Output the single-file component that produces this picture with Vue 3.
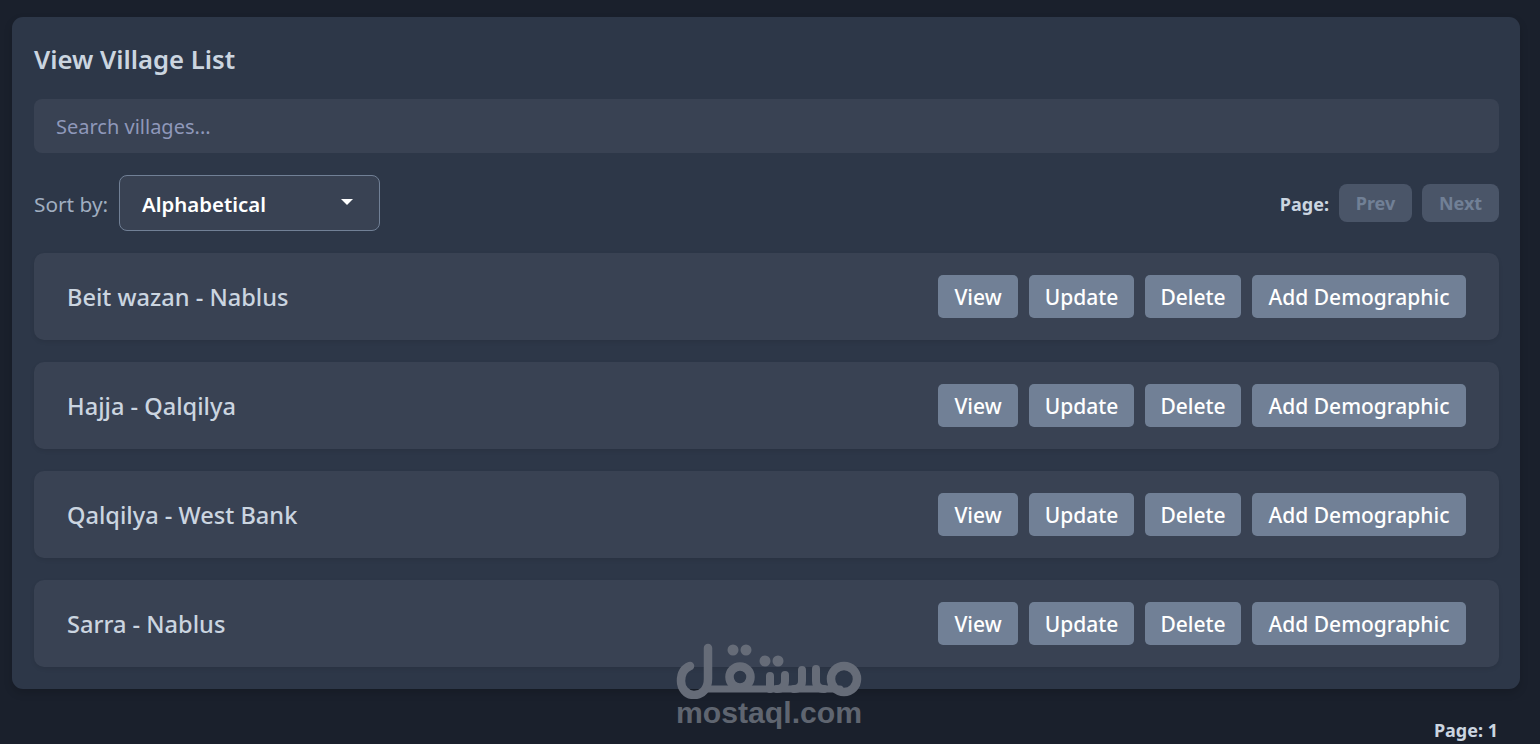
<template>
  <div class="page">
    <section class="panel">
      <h2 class="title">View Village List</h2>
      <input class="search" type="text" placeholder="Search villages..." />
      <div class="toolbar">
        <div class="sort">
          <label class="sort-label">Sort by:</label>
          <div class="select">
            <span>Alphabetical</span>
            <i class="caret"></i>
          </div>
        </div>
        <div class="pager">
          <span class="pager-label">Page:</span>
          <button class="pager-btn" disabled>Prev</button>
          <button class="pager-btn" disabled>Next</button>
        </div>
      </div>
      <div class="list">
        <div v-for="v in villages" :key="v" class="row">
          <span class="name">{{ v }}</span>
          <div class="actions">
            <button v-for="a in actions" :key="a" class="action">{{ a }}</button>
          </div>
        </div>
      </div>
    </section>
    <div class="page-no">Page: 1</div>

    <!-- mostaql watermark -->
    <div class="watermark">
      <svg width="190" height="56" viewBox="0 0 190 56" fill="none" stroke="#666c78" stroke-width="8.5" stroke-linecap="round" stroke-linejoin="round">
        <path d="M34 5V36C34 46 28 52 20 52C12 52 7 45 7 38C7 30 11 25 16 23" />
        <circle cx="66" cy="34" r="10.5" />
        <circle cx="170" cy="36" r="13" />
        <path d="M34 46H166" stroke-width="7" />
        <path d="M96 33V46M111 32V38C111 43 108 46 103 46M128 27V38C128 43 125 46 120 46M142 26V38C142 43 145 46 150 46" stroke-width="8" />
        <g fill="#666c78" stroke="none">
          <circle cx="59" cy="7" r="5.5" />
          <circle cx="72" cy="7" r="5.5" />
          <circle cx="91" cy="18" r="5.5" />
          <circle cx="104" cy="18" r="5.5" />
        </g>
      </svg>
      <div class="wm-text">mostaql.com</div>
    </div>
  </div>
</template>

<script setup>
const villages = ['Beit wazan - Nablus', 'Hajja - Qalqilya', 'Qalqilya - West Bank', 'Sarra - Nablus']
const actions = ['View', 'Update', 'Delete', 'Add Demographic']
</script>

<style>
html, body {
  margin: 0;
  background: #1a202c;
}
</style>

<style scoped>
.page {
  position: relative;
  height: 744px;
  overflow: hidden;
  box-sizing: border-box;
  padding: 17px 20px 0 12px;
  background: #1a202c;
  font-family: "Noto Sans", "Open Sans", sans-serif;
}
.panel {
  background: #2d3748;
  border-radius: 11px;
  padding: 22px 21px 22px 22px;
  box-shadow: 0 4px 8px rgba(0, 0, 0, 0.15);
}
.title {
  margin: 0 0 22px;
  font-size: 25.7px;
  line-height: 42px;
  height: 38px;
  font-weight: 600;
  color: #cbd5e0;
}
.search {
  display: block;
  width: 100%;
  box-sizing: border-box;
  height: 54px;
  padding: 0 22px;
  border: none;
  border-radius: 8px;
  background: #394253;
  font: inherit;
  font-size: 20px;
  color: #cbd5e0;
  outline: none;
}
.search::placeholder {
  color: #8f98ba;
  opacity: 1;
}
.toolbar {
  display: flex;
  align-items: center;
  justify-content: space-between;
  margin: 22px 0;
}
.sort {
  display: flex;
  align-items: center;
  gap: 11px;
}
.sort-label {
  padding-top: 2px;
  font-size: 20.8px;
  color: #a0aec0;
}
.select {
  width: 261px;
  height: 56px;
  box-sizing: border-box;
  display: flex;
  align-items: center;
  justify-content: space-between;
  padding: 2px 26px 0 22px;
  background: #394253;
  border: 1px solid #718096;
  border-radius: 8px;
  font-size: 20.4px;
  font-weight: 600;
  color: #fff;
}
.caret {
  margin-top: -5px;
  border-left: 6px solid transparent;
  border-right: 6px solid transparent;
  border-top: 6px solid #fff;
}
.pager {
  display: flex;
  align-items: center;
  gap: 10px;
}
.pager-label {
  padding-top: 1px;
  font-size: 18px;
  font-weight: 700;
  color: #cbd5e0;
}
.pager-btn {
  width: 73px;
  height: 38px;
  padding: 0;
  border: none;
  border-radius: 8px;
  background: #4a5568;
  font: inherit;
  font-size: 18px;
  font-weight: 700;
  color: #718096;
}
.pager-btn:last-child {
  width: 77px;
}
.list {
  display: flex;
  flex-direction: column;
  gap: 22px;
}
.row {
  display: flex;
  align-items: center;
  justify-content: space-between;
  padding: 22px 33px;
  background: #394253;
  border-radius: 10px;
  box-shadow: 0 2px 4px rgba(0, 0, 0, 0.08);
}
.name {
  padding-top: 1px;
  font-size: 23.6px;
  font-weight: 500;
  color: #cbd5e0;
}
.actions {
  display: flex;
  gap: 11px;
}
.action {
  height: 43px;
  padding: 1px 0 0;
  border: none;
  border-radius: 5px;
  background: #718096;
  font: inherit;
  font-size: 21px;
  font-weight: 500;
  color: #fff;
}
.action:nth-child(1) { width: 80px; }
.action:nth-child(2) { width: 105px; }
.action:nth-child(3) { width: 96px; }
.action:nth-child(4) { width: 214px; }
.page-no {
  margin: 29px 22px 0 0;
  text-align: right;
  font-size: 18px;
  font-weight: 700;
  color: #cbd5e0;
}
.watermark {
  position: absolute;
  left: 674px;
  top: 643px;
  width: 190px;
  display: flex;
  flex-direction: column;
  align-items: center;
  pointer-events: none;
}
.wm-text {
  margin-top: -1px;
  font-family: "Liberation Sans", sans-serif;
  font-size: 30.2px;
  line-height: 30px;
  font-weight: 700;
  color: #5f6570;
}
</style>
